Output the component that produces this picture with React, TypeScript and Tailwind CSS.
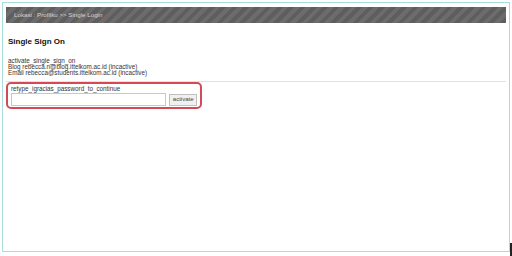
export default function App() {
  return (
    <div className="w-[512px] h-[256px] bg-white relative overflow-hidden" style={{ fontFamily: '"Liberation Sans", Arial, sans-serif' }}>
      <div className="absolute left-[2px] top-[2px] w-[508px] h-[250px] border border-[#a9dcdc] bg-white">
        <div className="mx-[3px] mt-[4px] h-[16px] flex items-center px-[8px] text-[6.2px] text-[#d4d4d4] bg-[repeating-linear-gradient(135deg,#5e5e5e_0px,#5e5e5e_4px,#6c6c6c_4px,#6c6c6c_8px)]">
          Lokasi : Profilku &gt;&gt; Single Login
        </div>
        <div className="px-[5px] pt-[14px]">
          <div className="text-[8px] font-bold text-[#111] leading-[10px]">Single Sign On</div>
          <div className="mt-[11px] text-[6.3px] leading-[6px] text-[#333]">
            <div>activate_single_sign_on</div>
            <div>Blog rebecca.n@blog.ittelkom.ac.id (incactive)</div>
            <div>Email rebecca@students.ittelkom.ac.id (incactive)</div>
          </div>
        </div>
        <div className="mt-[5px] mx-[3px] border-t border-[#e2e2e2]"></div>
        <div className="ml-[3px] w-[196px] h-[27px] border-2 border-[#d24a56] rounded-[5px] px-[3px] pt-[1px]">
          <div className="text-[6.3px] leading-[7px] text-[#333]">retype_igracias_password_to_continue</div>
          <div className="flex items-center gap-[3px] mt-[1px]">
            <div className="w-[158px] h-[13px] border border-[#c8c8c8] bg-white"></div>
            <div className="w-[28px] h-[12px] border border-[#c0c0c0] bg-[#f0f0f0] text-[6px] text-[#444] flex items-center justify-center">activate</div>
          </div>
        </div>
      </div>
      <div className="absolute left-[510px] top-[243px] w-[2px] h-[13px] bg-[#222]"></div>
    </div>
  );
}
